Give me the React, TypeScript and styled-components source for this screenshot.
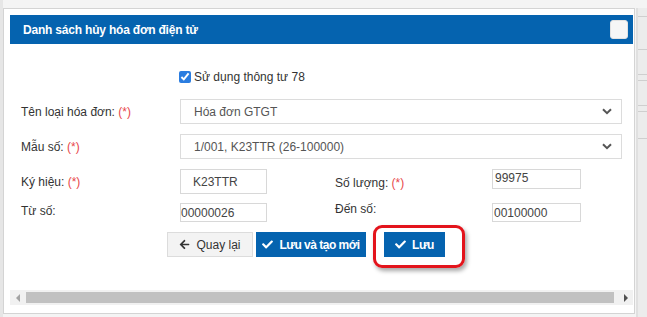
import React from "react";
import styled, { createGlobalStyle } from "styled-components";
import { FaArrowLeft, FaCheck } from "react-icons/fa";

const GlobalStyle = createGlobalStyle`
  html, body {
    margin: 0;
    padding: 0;
    background: #f4f4f4;
    font-family: "Liberation Sans", Arial, sans-serif;
    font-size: 12px;
    color: #333;
  }
`;

const BLUE = "#0563af";

const Page = styled.div`
  display: flex;
  padding: 8px 0 0 3px;
  height: 317px;
  box-sizing: border-box;
  background: linear-gradient(to right, #e6e6e6 0, #e6e6e6 3px, #f4f4f4 3px);
`;

const Dialog = styled.div`
  width: 632px;
  height: 306px;
  box-sizing: border-box;
  border: 1px solid #d4d4d4;
  background: #fff;
  padding: 6px 1px 0 6px;
  display: flex;
  flex-direction: column;
`;

const Backdrop = styled.div`
  flex: 1;
  display: flex;
  flex-direction: column;
  border-left: 2px solid #e0e0e0;
  margin-left: 1px;
  background: #ececec;
`;

const BackdropRow = styled.div<{ $h: number }>`
  height: ${(p) => p.$h}px;
  border-bottom: 1px solid #cfcfcf;
  flex: none;
`;

const Header = styled.div`
  height: 29px;
  background: ${BLUE};
  display: flex;
  align-items: center;
  justify-content: space-between;
  padding: 0 5px 0 13px;
`;

const Title = styled.h4`
  margin: 0;
  color: #fff;
  font-size: 12px;
  font-weight: bold;
  letter-spacing: -0.2px;
`;

const CloseButton = styled.button`
  width: 18px;
  height: 19px;
  padding: 0;
  border: 1px solid #e2e2e2;
  border-radius: 3px;
  background: #f6f6f6;
`;

const Body = styled.div`
  flex: 1;
  display: flex;
  flex-direction: column;
  padding: 0 0 0 11px;
`;

const CheckRow = styled.label`
  display: flex;
  align-items: center;
  gap: 3px;
  margin: 25px 0 0 157px;
  height: 16px;
  color: #333;
`;

const Check = styled.input`
  width: 12px;
  height: 12px;
  margin: 0 0 0 1px;
  accent-color: #2b7de0;
`;

const FieldRow = styled.div<{ $top: number }>`
  display: grid;
  grid-template-columns: 159px 442px;
  align-items: center;
  margin-top: ${(p) => p.$top}px;
`;

const PairRow = styled.div<{ $top: number }>`
  display: grid;
  grid-template-columns: 159px 155px 157px 89px;
  align-items: center;
  margin-top: ${(p) => p.$top}px;
`;

const Label = styled.span<{ $shift?: number }>`
  color: #333;
  position: relative;
  top: ${(p) => p.$shift ?? 0}px;
`;

const Req = styled.span`
  color: #e8474b;
`;

const SelectBox = styled.div`
  height: 25px;
  box-sizing: border-box;
  border: 1px solid #dcdcdc;
  display: flex;
  align-items: center;
  justify-content: space-between;
  padding: 0 9px 0 13px;
  color: #555;
`;

const TextBox = styled.div<{ $h: number; $pad: number; $w: number; $align?: string }>`
  width: ${(p) => p.$w}px;
  height: ${(p) => p.$h}px;
  box-sizing: border-box;
  border: 1px solid #d8d8d8;
  padding-left: ${(p) => p.$pad}px;
  display: flex;
  align-items: ${(p) => p.$align ?? "center"};
  align-self: ${(p) => (p.$align ? "start" : "center")};
  color: #444;
  line-height: 16px;
`;

const ButtonRow = styled.div`
  display: flex;
  margin: 10px 0 0 146px;
  gap: 3px;
`;

const Button = styled.button<{ $primary?: boolean; $w: number }>`
  width: ${(p) => p.$w}px;
  height: 25px;
  box-sizing: border-box;
  display: flex;
  align-items: center;
  justify-content: center;
  gap: 6px;
  padding: 0;
  border: 1px solid ${(p) => (p.$primary ? BLUE : "#dcdcdc")};
  background: ${(p) => (p.$primary ? BLUE : "#f3f3f3")};
  color: ${(p) => (p.$primary ? "#fff" : "#333")};
  font-family: "Liberation Sans", Arial, sans-serif;
  font-size: 12px;
  font-weight: ${(p) => (p.$primary ? "bold" : "normal")};
  letter-spacing: ${(p) => (p.$primary ? "-0.5px" : "0")};
  svg {
    font-size: 11px;
    flex: none;
  }
`;

const Highlight = styled.div`
  position: relative;
  margin-left: 15px;
  &::after {
    content: "";
    position: absolute;
    inset: -7px -20px -11px -11px;
    border: 3px solid #e3141c;
    border-radius: 9px;
    box-shadow: 2px 3px 4px rgba(0, 0, 0, 0.35);
    pointer-events: none;
  }
`;

const ScrollBar = styled.div`
  margin: auto 0 8px -11px;
  height: 15px;
  background: #f1f1f1;
  display: flex;
  align-items: stretch;
`;

const Arrow = styled.div<{ $dir: "left" | "right"; $dark?: boolean }>`
  width: 15px;
  display: flex;
  align-items: center;
  justify-content: center;
  &::before {
    content: "";
    width: 0;
    height: 0;
    border-top: 4px solid transparent;
    border-bottom: 4px solid transparent;
    ${(p) =>
      p.$dir === "left"
        ? `border-right: 4px solid ${p.$dark ? "#505050" : "#a3a3a3"};`
        : `border-left: 4px solid ${p.$dark ? "#505050" : "#a3a3a3"};`}
  }
`;

const Thumb = styled.div`
  flex: 1;
  margin: 2px 4px 2px 1px;
  background: #c1c1c1;
`;

const Chevron = () => (
  <svg width="10" height="7" viewBox="0 0 10 7">
    <path d="M1 1.2 L5 5.2 L9 1.2" fill="none" stroke="#555" strokeWidth="2" />
  </svg>
);

const App = () => {
  return (
    <>
      <GlobalStyle />
      <Page>
        <Dialog>
          <Header>
            <Title>Danh sách hủy hóa đơn điện tử</Title>
            <CloseButton aria-label="close" />
          </Header>
          <Body>
            <CheckRow>
              <Check type="checkbox" checked readOnly />
              <span>Sử dụng thông tư 78</span>
            </CheckRow>
            <FieldRow $top={14}>
              <Label>
                Tên loại hóa đơn: <Req>(*)</Req>
              </Label>
              <SelectBox>
                <span>Hóa đơn GTGT</span>
                <Chevron />
              </SelectBox>
            </FieldRow>
            <FieldRow $top={10}>
              <Label>
                Mẫu số: <Req>(*)</Req>
              </Label>
              <SelectBox>
                <span>1/001, K23TTR (26-100000)</span>
                <Chevron />
              </SelectBox>
            </FieldRow>
            <PairRow $top={10}>
              <Label>
                Ký hiệu: <Req>(*)</Req>
              </Label>
              <TextBox $w={87} $h={25} $pad={12}>K23TTR</TextBox>
              <Label $shift={1}>
                Số lượng: <Req>(*)</Req>
              </Label>
              <TextBox $w={89} $h={20} $pad={2} $align="flex-start">
                99975
              </TextBox>
            </PairRow>
            <PairRow $top={9}>
              <Label $shift={-2}>Từ số:</Label>
              <TextBox $w={87} $h={19} $pad={0}>00000026</TextBox>
              <Label $shift={-4}>Đến số:</Label>
              <TextBox $w={89} $h={19} $pad={1}>00100000</TextBox>
            </PairRow>
            <ButtonRow>
              <Button $w={86}>
                <FaArrowLeft />
                Quay lại
              </Button>
              <Button $primary $w={110}>
                <FaCheck />
                Lưu và tạo mới
              </Button>
              <Highlight>
                <Button $primary $w={61}>
                  <FaCheck />
                  Lưu
                </Button>
              </Highlight>
            </ButtonRow>
            <ScrollBar>
              <Arrow $dir="left" />
              <Thumb />
              <Arrow $dir="right" $dark />
            </ScrollBar>
          </Body>
        </Dialog>
        <Backdrop>
          <BackdropRow $h={8} />
          <BackdropRow $h={32} />
          <BackdropRow $h={24} />
          <BackdropRow $h={5} />
          <BackdropRow $h={24} />
          <BackdropRow $h={5} />
          <BackdropRow $h={26} />
        </Backdrop>
      </Page>
    </>
  );
};

export default App;
